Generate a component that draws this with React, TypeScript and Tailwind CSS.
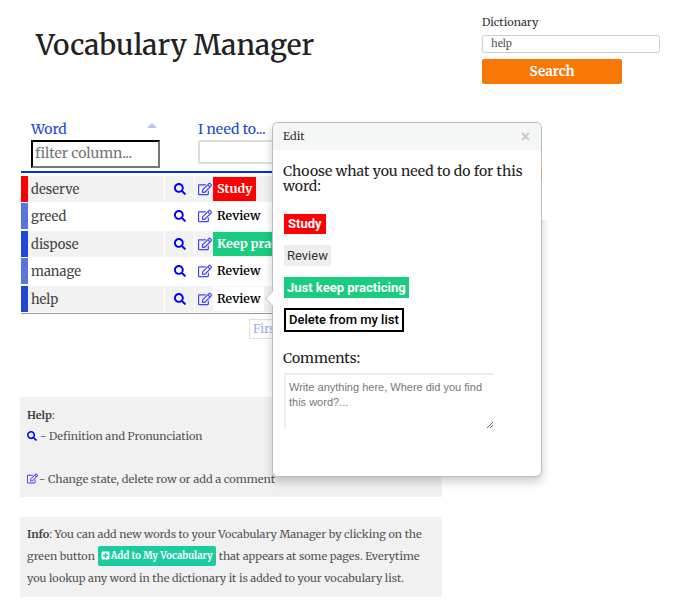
import React from 'react';
import { FaSearch, FaRegEdit, FaPlusSquare } from 'react-icons/fa';

const SERIF = "font-['Merriweather','DejaVu_Serif',serif]";

const rows = [
  { word: 'deserve', color: 'bg-[#ff0000]', bg: 'bg-[#f2f2f2]', state: 'study' },
  { word: 'greed', color: 'bg-[#5a74e0]', bg: 'bg-white', state: 'review' },
  { word: 'dispose', color: 'bg-[#2146d8]', bg: 'bg-[#f2f2f2]', state: 'keep' },
  { word: 'manage', color: 'bg-[#5a74e0]', bg: 'bg-white', state: 'review' },
  { word: 'help', color: 'bg-[#2146d8]', bg: 'bg-[#f2f2f2]', state: 'current' },
];

function StateLabel({ state }: { state: string }) {
  if (state === 'study') {
    return <span className="h-[24px] leading-[24px] px-1 bg-[#ff0000] text-white font-bold text-[12.5px] whitespace-nowrap">Study</span>;
  }
  if (state === 'keep') {
    return (
      <span className="w-[59px] h-[24px] leading-[24px] pl-1 bg-[#19cc80] text-white font-bold text-[12.5px] whitespace-nowrap overflow-hidden">
        Keep practicing
      </span>
    );
  }
  return (
    <span className={`w-[51px] h-[24px] leading-[24px] px-1 text-black font-semibold text-[12.3px] whitespace-nowrap ${state === 'current' ? 'bg-white' : ''}`}>
      Review
    </span>
  );
}

function WordTable() {
  return (
    <div className="w-[521px] ml-[1px]">
      <div className="flex pl-[10px] h-[52px]">
        <div className="w-[129px] shrink-0 relative">
          <div className="text-[14px] leading-[20px] mt-[-1px] text-[#2146d8]">Word</div>
          <div className="absolute right-[3px] top-[3px] w-0 h-0 border-l-[5px] border-r-[5px] border-b-[5px] border-l-transparent border-r-transparent border-b-[#b7c3f2]" />
          <div className="w-[129px] h-[28px] mt-[1px] border-2 border-t-black border-l-black border-r-[#777] border-b-[#777] pl-[2px] text-[14px] leading-[23px] text-[#757575]">
            filter column...
          </div>
        </div>
        <div className="ml-[38px]">
          <div className="text-[14px] leading-[20px] mt-[-1px] text-[#2146d8] whitespace-nowrap">I need to...</div>
          <div className="w-[200px] h-[24px] mt-[1px] border-2 border-[#ddd] rounded-[2px]" />
        </div>
      </div>
      <div className="h-[2px] bg-[#0033dd] mt-[-1px] mb-[3px]" />
      <div className="border-b border-[#999]">
        {rows.map((r) => (
          <div key={r.word} className="flex h-[27.4px] text-[13px]">
            <div className={`w-[7px] h-[26px] shrink-0 ${r.color}`} />
            <div className={`w-[136px] h-[26px] pl-[3px] leading-[27px] text-[#444] ${r.bg}`}>{r.word}</div>
            <div className={`w-[29px] h-[26px] ml-[1px] flex items-center justify-center ${r.bg}`}>
              <FaSearch className="w-[12px] h-[12px] text-[#0000ff]" />
            </div>
            <div className={`flex-1 h-[26px] ml-[1px] flex items-center pl-[3px] gap-[1px] ${r.bg}`}>
              <FaRegEdit className="w-[14px] h-[14px] text-[#4040ff]" />
              <StateLabel state={r.state} />
            </div>
          </div>
        ))}
      </div>
    </div>
  );
}

function EditPopover() {
  return (
    <div className="absolute left-[272px] top-[122px] w-[270px] h-[355px] bg-white border border-[#bbb] rounded-[6px] shadow-[0_5px_10px_rgba(0,0,0,0.2)]">
      <div className="absolute left-[-6px] top-[170px] w-[11px] h-[11px] rotate-45 bg-white border-l border-b border-[#ccc]" />
      <div className="relative h-[27px] bg-[#f5f6f6] rounded-t-[6px] flex items-center justify-between pl-[10px] pr-[11px] text-[11px] text-[#333]">
        <span>Edit</span>
        <span className="font-['Liberation_Sans',sans-serif] text-[16px] font-bold text-[#c8c8c8]">×</span>
      </div>
      <div className="relative pl-[10px]">
        <p className="mt-[14px] text-[14px] leading-[15px] text-[#222] w-[250px]">Choose what you need to do for this word:</p>
        <div className="flex flex-col items-start ml-[1px] font-['Roboto',sans-serif] text-[13px] mt-[20px]">
          <span className="h-[20px] leading-[20px] px-[4px] bg-[#ff0000] text-white font-bold">Study</span>
          <span className="h-[21px] leading-[21px] px-[3px] mt-[11px] bg-[#eeeeee] text-[#333]">Review</span>
          <span className="h-[21px] leading-[21px] px-[3px] mt-[11px] bg-[#19cc80] text-white font-bold">Just keep practicing</span>
          <span className="h-[24px] leading-[20px] px-[3px] mt-[10px] border-2 border-black text-black font-medium">Delete from my list</span>
        </div>
        <p className="mt-[17px] text-[14px] leading-[18px] text-[#222]">Comments:</p>
        <div className="relative w-[210px] h-[56px] ml-[1px] mt-[6px] border-t-2 border-l-2 border-[#eeeeee] pl-[3px] pt-[5px] font-['Liberation_Sans',sans-serif] text-[11px] leading-[15px] text-[#777]">
          Write anything here, Where did you find this word?...
          <svg className="absolute right-0 bottom-0" width="8" height="8" viewBox="0 0 8 8">
            <path d="M1 7 L7 1 M4 7 L7 4" stroke="#666" strokeWidth="1" />
          </svg>
        </div>
      </div>
    </div>
  );
}

export default function App() {
  return (
    <div className={`relative w-[680px] h-[609px] overflow-hidden bg-white ${SERIF}`}>
      <div className="flex">
        <h1 className="pl-[36px] pt-[26px] w-[482px] text-[28px] leading-[38px] text-[#222] font-medium whitespace-nowrap">
          Vocabulary Manager
        </h1>
        <div className="pt-[15px] w-[178px]">
          <div className="text-[11px] leading-[15px] text-[#333]">Dictionary</div>
          <div className="h-[18px] mt-[5px] border border-[#ccc] rounded-[3px] pl-[8px] text-[10px] leading-[16px] text-[#555]">help</div>
          <div className="w-[140px] h-[25px] mt-[6px] bg-[#f77707] rounded-[2px] text-center text-[13.5px] leading-[25px] font-bold text-white">Search</div>
        </div>
      </div>
      <div className="pl-[20px] pt-[36px]">
        <WordTable />
        <div className="h-[20px] w-[36px] ml-[229px] mt-[5px] border border-[#dde] pl-[3px] text-[12px] leading-[18px] text-[#9fb0ee] overflow-hidden">First</div>
        <div className="w-[422px] h-[100px] mt-[58px] bg-[#f1f1f1] px-[7px] pt-[10px] text-[10.9px] text-[#555]">
          <div className="leading-[16px]"><b className="text-[#444]">Help</b>:</div>
          <div className="flex items-center gap-[3px] h-[16px] mt-[5px]">
            <FaSearch className="w-[10px] h-[10px] text-[#0000ff]" />
            <span>- Definition and Pronunciation</span>
          </div>
          <div className="flex items-center gap-[1px] h-[16px] mt-[27px]">
            <FaRegEdit className="w-[11px] h-[11px] text-[#4040ff]" />
            <span className="whitespace-nowrap text-[11.1px]">- Change state, delete row or add a comment</span>
          </div>
        </div>
        <div className="w-[422px] h-[80px] mt-[20px] bg-[#f1f1f1] px-[7px] pt-[6px] text-[10.9px] leading-[22px] text-[#555]">
          <div className="whitespace-nowrap"><b className="text-[#444]">Info</b>: You can add new words to your Vocabulary Manager by clicking on the</div>
          <div className="whitespace-nowrap flex items-center gap-[3px]">
            green button
            <span className="h-[20px] px-[3px] rounded-[2px] bg-[#1ccb9f] text-white text-[9.5px] leading-[20px] font-bold inline-flex items-center gap-[1px]">
              <FaPlusSquare className="w-[9px] h-[9px]" />
              Add to My Vocabulary
            </span>
            that appears at some pages. Everytime
          </div>
          <div className="whitespace-nowrap">you lookup any word in the dictionary it is added to your vocabulary list.</div>
        </div>
      </div>
      <EditPopover />
      <div className="absolute left-[542px] top-[100px] w-[30px] h-[120px] bg-white" />
      <div className="absolute left-[541px] top-[167px] w-px h-[13px] bg-[#d9a273]" />
    </div>
  );
}
